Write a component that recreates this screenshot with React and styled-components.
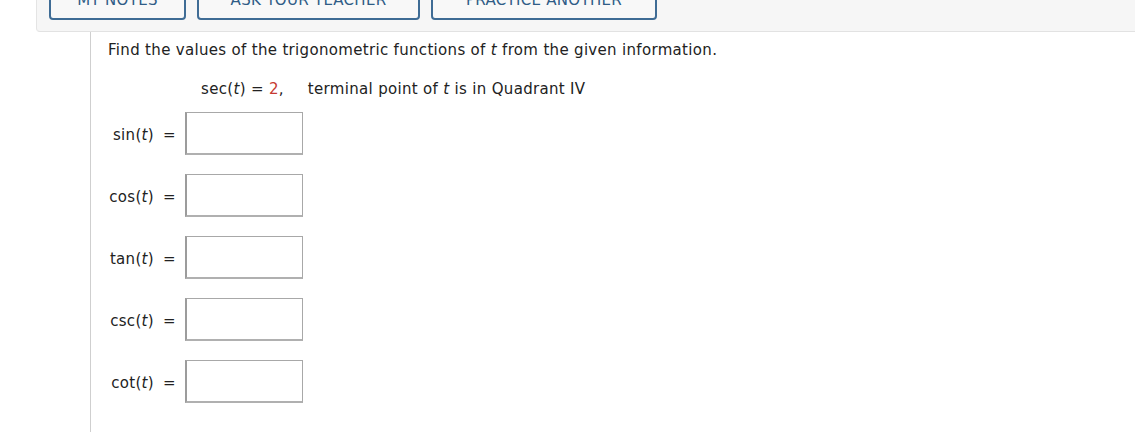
import React from "react";
import styled, { createGlobalStyle } from "styled-components";

const GlobalStyle = createGlobalStyle`
  html, body {
    margin: 0;
    padding: 0;
    background: #fff;
    overflow: hidden;
  }
  body {
    font-family: "DejaVu Sans", Verdana, sans-serif;
    color: #222;
  }
`;

const Page = styled.div`
  width: 1135px;
  height: 432px;
  display: flex;
  flex-direction: column;
  overflow: hidden;
`;

const Toolbar = styled.div`
  margin-left: 36px;
  height: 31px;
  background: #f6f6f6;
  border-left: 1px solid #e4e4e4;
  border-bottom: 1px solid #e2e2e2;
  border-bottom-left-radius: 4px;
  display: flex;
  gap: 11px;
  padding-left: 12px;
  flex-shrink: 0;
`;

const ToolButton = styled.div`
  width: ${(p) => p.$w}px;
  height: 40px;
  margin-top: -20px;
  box-sizing: border-box;
  border: 2px solid #3f6c95;
  border-radius: 4px;
  background: #f8f8f8;
  color: #2f5c86;
  font-size: 15px;
  letter-spacing: 0.3px;
  display: flex;
  align-items: center;
  justify-content: center;
`;

const Main = styled.div`
  flex: 1;
  margin-left: 90px;
  border-left: 1px solid #cfcfcf;
  padding: 9px 0 0 17px;
  font-size: 15px;
  line-height: 18px;
  letter-spacing: 0.32px;
`;

const Instruction = styled.div``;

const Given = styled.div`
  margin-top: 21px;
  margin-left: 93px;
  display: flex;
`;

const Red = styled.span`
  color: #c63a32;
`;

const Spacer = styled.span`
  display: inline-block;
  width: ${(p) => p.$w}px;
`;

const Rows = styled.div`
  margin-top: 14px;
  display: flex;
  flex-direction: column;
  gap: 19px;
`;

const Row = styled.div`
  display: flex;
  align-items: center;
`;

const Label = styled.div`
  width: 46px;
  text-align: right;
  padding-top: 2px;
`;

const Eq = styled.div`
  width: 31px;
  text-align: center;
  padding-top: 2px;
`;

const AnswerBox = styled.div`
  width: 118px;
  height: 43px;
  box-sizing: border-box;
  border: 1px solid #a8a8a8;
  border-left: 2px solid #9c9c9c;
  border-bottom: 2px solid #b0b0b0;
  background: #fff;
`;

const fns = ["sin", "cos", "tan", "csc", "cot"];

export default function App() {
  return (
    <Page>
      <GlobalStyle />
      <Toolbar>
        <ToolButton $w={137}>MY NOTES</ToolButton>
        <ToolButton $w={223}>ASK YOUR TEACHER</ToolButton>
        <ToolButton $w={226}>PRACTICE ANOTHER</ToolButton>
      </Toolbar>
      <Main>
        <Instruction>
          Find the values of the trigonometric functions of <i>t</i> from the
          given information.
        </Instruction>
        <Given>
          <span>
            sec(<i>t</i>) = <Red>2</Red>,
          </span>
          <Spacer $w={24} />
          <span>
            terminal point of <i>t</i> is in Quadrant IV
          </span>
        </Given>
        <Rows>
          {fns.map((f) => (
            <Row key={f}>
              <Label>
                {f}(<i>t</i>)
              </Label>
              <Eq>=</Eq>
              <AnswerBox />
            </Row>
          ))}
        </Rows>
      </Main>
    </Page>
  );
}
